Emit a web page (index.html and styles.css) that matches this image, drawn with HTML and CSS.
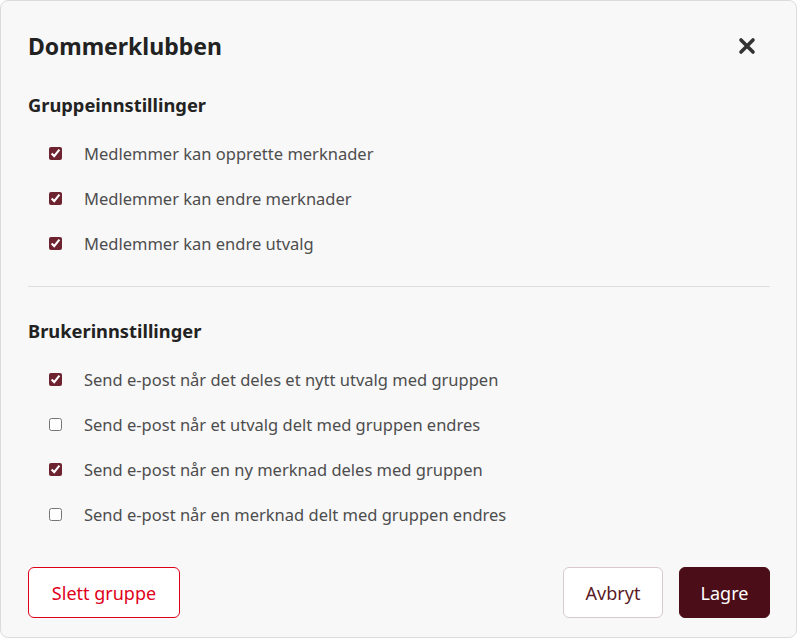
FILE: index.html
```html
<!DOCTYPE html>
<html lang="no">
<head>
<meta charset="utf-8">
<title>Dommerklubben</title>
<link rel="stylesheet" href="styles.css">
</head>
<body>
<div class="modal">
  <header class="modal-header">
    <h1 class="modal-title">Dommerklubben</h1>
    <button class="close-btn" aria-label="Lukk">
      <svg width="18" height="18" viewBox="0 0 18 18"><path d="M3 3 L15 15 M15 3 L3 15" stroke="#333" stroke-width="3.6" stroke-linecap="round"/></svg>
    </button>
  </header>
  <section class="section">
    <h2 class="section-title">Gruppeinnstillinger</h2>
    <ul class="options">
      <li class="option"><input type="checkbox" checked><span>Medlemmer kan opprette merknader</span></li>
      <li class="option"><input type="checkbox" checked><span>Medlemmer kan endre merknader</span></li>
      <li class="option"><input type="checkbox" checked><span>Medlemmer kan endre utvalg</span></li>
    </ul>
  </section>
  <hr class="divider">
  <section class="section">
    <h2 class="section-title">Brukerinnstillinger</h2>
    <ul class="options">
      <li class="option"><input type="checkbox" checked><span>Send e-post når det deles et nytt utvalg med gruppen</span></li>
      <li class="option"><input type="checkbox"><span>Send e-post når et utvalg delt med gruppen endres</span></li>
      <li class="option"><input type="checkbox" checked><span>Send e-post når en ny merknad deles med gruppen</span></li>
      <li class="option"><input type="checkbox"><span>Send e-post når en merknad delt med gruppen endres</span></li>
    </ul>
  </section>
  <footer class="modal-footer">
    <button class="btn btn-danger">Slett gruppe</button>
    <div class="footer-right">
      <button class="btn btn-secondary">Avbryt</button>
      <button class="btn btn-primary">Lagre</button>
    </div>
  </footer>
</div>
</body>
</html>
```
FILE: styles.css
```css
* { box-sizing: border-box; }
html, body { margin: 0; padding: 0; background: #ffffff; }
body { font-family: "Noto Sans", "Open Sans", sans-serif; color: #222; }
.modal {
  width: 797px;
  height: 638px;
  background: #f8f8f8;
  border: 1px solid #dcdcdc;
  border-radius: 8px;
  padding: 0 26px 0 27px;
  display: flex;
  flex-direction: column;
}
.modal-header {
  display: flex;
  justify-content: space-between;
  align-items: center;
  height: 89px;
}
.modal-title {
  margin: 0;
  font-size: 23px;
  font-weight: 700;
  color: #222;
}
.close-btn {
  border: 0;
  background: none;
  padding: 0;
  margin-right: 14px;
  width: 18px;
  height: 18px;
  display: flex;
  cursor: pointer;
}
.section-title {
  margin: 3px 0 0 0;
  font-size: 18.3px;
  font-weight: 700;
  color: #222;
  line-height: 24px;
}
.options {
  list-style: none;
  margin: 0;
  padding: 14px 0 0 21px;
}
.option {
  display: flex;
  align-items: center;
  height: 45px;
  font-size: 16.5px;
  color: #4d4d4d;
}
.option input {
  margin: 0 22px 0 0;
  width: 13px;
  height: 13px;
  accent-color: #6e2430;
}
.divider {
  border: 0;
  border-top: 1px solid #dedede;
  margin: 20px 0 29px 0;
}
.modal-footer {
  margin-top: auto;
  margin-bottom: 19px;
  display: flex;
  justify-content: space-between;
  align-items: center;
}
.footer-right { display: flex; gap: 16px; }
.btn {
  font-family: inherit;
  font-size: 18px;
  height: 51px;
  border-radius: 6px;
  padding: 0 18px;
  cursor: pointer;
}
.btn-danger {
  background: #fff;
  border: 1px solid #e0001a;
  color: #e0001a;
  width: 152px;
}
.btn-secondary {
  background: #fff;
  border: 1px solid #d8c9cc;
  color: #5a1a26;
  width: 100px;
}
.btn-primary {
  background: #4b0d18;
  border: 1px solid #4b0d18;
  color: #fff;
  width: 91px;
}
```
